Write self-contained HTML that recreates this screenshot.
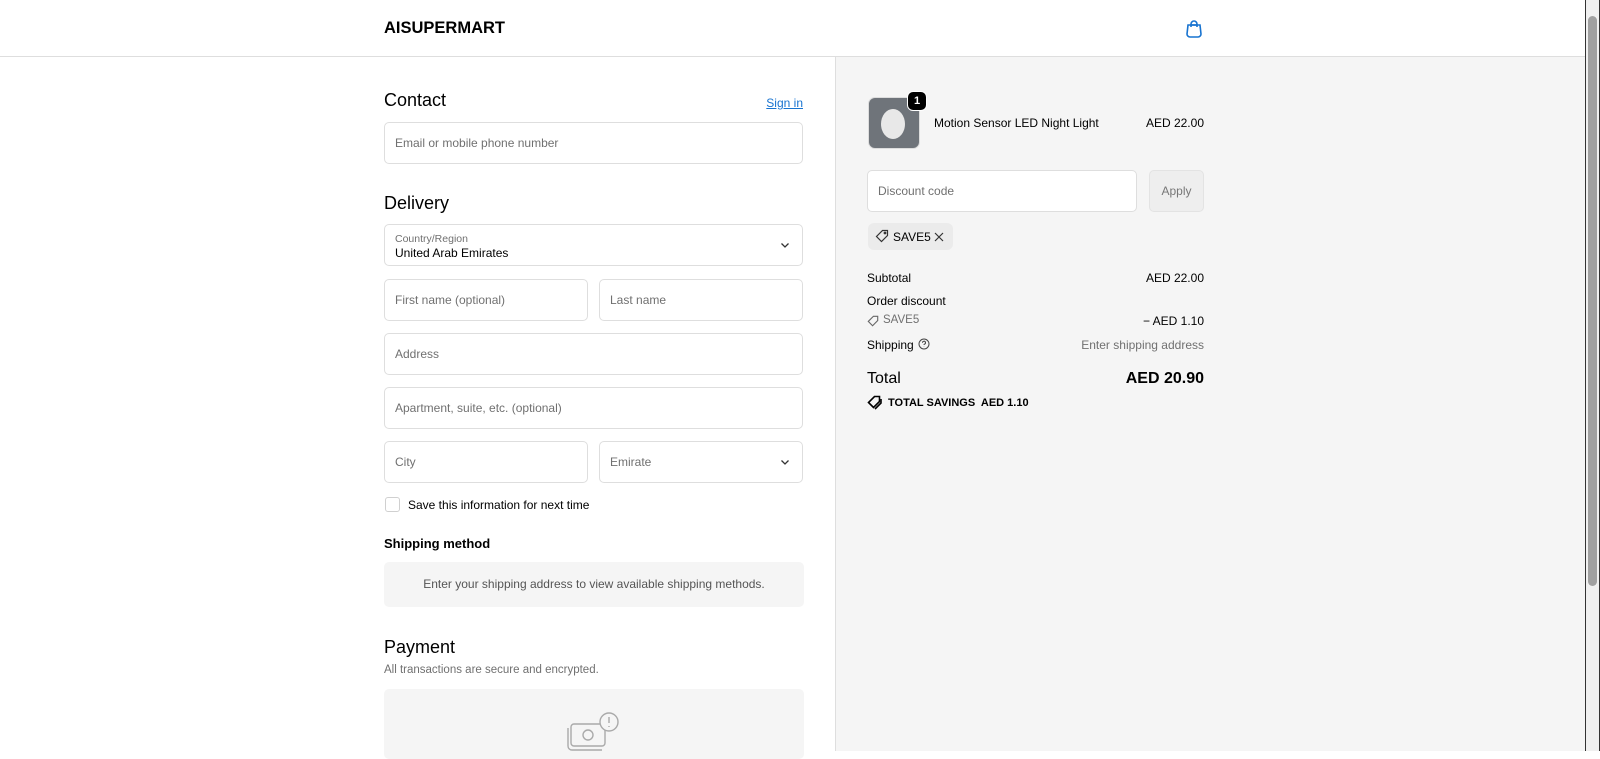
<!DOCTYPE html>
<html><head><meta charset="utf-8"><style>
*{box-sizing:border-box;margin:0;padding:0}
body{width:1600px;height:751px;overflow:hidden;font-family:"Liberation Sans",sans-serif;color:#000;background:#fff;position:relative;font-size:12px}
.hdr{position:absolute;left:0;top:0;width:1585px;height:57px;border-bottom:1px solid #dedede;background:#fff}
.logo{position:absolute;left:384px;top:19px;font-size:16.5px;font-weight:bold}
.right{position:absolute;left:835px;top:57px;width:750px;height:694px;background:#f5f5f5;border-left:1px solid #dedede}
.sb{position:absolute;left:1585px;top:0;width:15px;height:751px;background:#f0f0f0;border-left:1px solid #333;border-right:1px solid #333}
.sb div{position:absolute;left:2px;top:16px;width:9px;height:570px;background:#a0a0a0;border-radius:5px}
.a{position:absolute}
.r{transform:translateX(-100%);white-space:nowrap}
h2{position:absolute;font-size:18px;font-weight:normal}
.inp{position:absolute;border:1px solid #dedede;border-radius:5px;background:#fff;height:42px;padding:0 10px;line-height:40px;color:#707070;font-size:12px}
.chev{position:absolute;right:12px;top:15px}
.muted{color:#707070}
.box{position:absolute;background:#f5f5f5;border-radius:5px}
</style></head><body>
<div class="hdr"><div class="logo">AISUPERMART</div>
<svg class="a" style="left:1185px;top:19px" width="18" height="19" viewBox="0 0 18 19" fill="none" stroke="#1773d0" stroke-width="1.6"><path d="M3 6h12l1 9a3 3 0 0 1-3 3H5a3 3 0 0 1-3-3z"/><path d="M6 8V5a3 3 0 0 1 6 0v3"/><path d="M6 6h6"/></svg>
</div>
<div class="sb"><div></div></div>

<h2 style="left:384px;top:90px">Contact</h2>
<a class="a r" style="left:803px;top:96px;color:#1773d0;text-decoration:underline">Sign in</a>
<div class="inp" style="left:384px;top:122px;width:419px">Email or mobile phone number</div>

<h2 style="left:384px;top:193px">Delivery</h2>
<div class="inp" style="left:384px;top:224px;width:419px;line-height:normal;padding-top:8px"><div style="font-size:10.5px">Country/Region</div><div style="color:#000;font-size:12px;margin-top:1px">United Arab Emirates</div>
<svg class="chev" width="10" height="10" viewBox="0 0 10 10"><path d="M1.5 3.5l3.5 3.5 3.5-3.5" fill="none" stroke="#333" stroke-width="1.3"/></svg></div>
<div class="inp" style="left:384px;top:279px;width:204px">First name (optional)</div>
<div class="inp" style="left:599px;top:279px;width:204px">Last name</div>
<div class="inp" style="left:384px;top:333px;width:419px">Address</div>
<div class="inp" style="left:384px;top:387px;width:419px">Apartment, suite, etc. (optional)</div>
<div class="inp" style="left:384px;top:441px;width:204px">City</div>
<div class="inp" style="left:599px;top:441px;width:204px">Emirate<svg class="chev" width="10" height="10" viewBox="0 0 10 10"><path d="M1.5 3.5l3.5 3.5 3.5-3.5" fill="none" stroke="#333" stroke-width="1.3"/></svg></div>
<div class="a" style="left:385px;top:497px;width:15px;height:15px;border:1px solid #d0d0d0;border-radius:3px;background:#fff"></div>
<div class="a" style="left:408px;top:498px">Save this information for next time</div>
<div class="a" style="left:384px;top:536px;font-size:13px;font-weight:bold">Shipping method</div>
<div class="box" style="left:384px;top:562px;width:420px;height:45px;text-align:center;line-height:45px;color:#555">Enter your shipping address to view available shipping methods.</div>
<h2 style="left:384px;top:637px">Payment</h2>
<div class="a muted" style="left:384px;top:664px;font-size:11.5px">All transactions are secure and encrypted.</div>
<div class="box" style="left:384px;top:689px;width:420px;height:70px">
<svg class="a" style="left:182px;top:22px" width="56" height="40" viewBox="0 0 56 40" fill="none" stroke="#aaa" stroke-width="1.4"><rect x="5" y="13" width="34" height="22" rx="3"/><path d="M2 17v18a4 4 0 0 0 4 4h30"/><circle cx="22" cy="24" r="5"/><circle cx="43" cy="11" r="9" fill="#f5f5f5"/><path d="M43 6v6M43 15v1"/></svg></div>

<div class="right"></div>
<div class="a" style="left:868px;top:97px;width:52px;height:52px;border-radius:7px;background:#6f747a;border:1px solid #ddd;overflow:hidden">
<div style="position:absolute;left:12px;top:11px;width:24px;height:30px;border-radius:50%;background:#e8e8e8"></div></div>
<div class="a" style="left:907px;top:91px;width:20px;height:20px;border-radius:6px;background:#000;color:#fff;font-size:11px;font-weight:bold;text-align:center;line-height:18px;border:1px solid #fff">1</div>
<div class="a" style="left:934px;top:116px">Motion Sensor LED Night Light</div>
<div class="a r" style="left:1204px;top:116px">AED 22.00</div>
<div class="inp" style="left:867px;top:170px;width:270px">Discount code</div>
<div class="a" style="left:1149px;top:170px;width:55px;height:42px;border:1px solid #e3e3e3;border-radius:5px;background:#eeeeee;color:#777;text-align:center;line-height:40px">Apply</div>
<div class="a" style="left:868px;top:223px;width:85px;height:27px;border-radius:6px;background:#ebebeb"></div>
<svg class="a" style="left:875px;top:229px" width="14" height="14" viewBox="0 0 14 14" fill="none" stroke="#333" stroke-width="1.2"><path d="M7.5 1.5h5v5l-6 6-5-5z"/><circle cx="10" cy="4" r=".8"/></svg>
<div class="a" style="left:893px;top:230px">SAVE5</div>
<svg class="a" style="left:934px;top:232px" width="10" height="10" viewBox="0 0 10 10" stroke="#333" stroke-width="1.2"><path d="M1 1l8 8M9 1l-8 8"/></svg>
<div class="a" style="left:867px;top:271px">Subtotal</div>
<div class="a r" style="left:1204px;top:271px">AED 22.00</div>
<div class="a" style="left:867px;top:294px">Order discount</div>
<svg class="a" style="left:867px;top:315px" width="12" height="12" viewBox="0 0 14 14" fill="none" stroke="#666" stroke-width="1.3"><path d="M7.5 1.5h5v5l-6 6-5-5z"/></svg>
<div class="a muted" style="left:883px;top:314px;font-size:11.5px">SAVE5</div>
<div class="a r" style="left:1204px;top:314px">− AED 1.10</div>
<div class="a" style="left:867px;top:338px">Shipping</div>
<svg class="a" style="left:918px;top:338px" width="12" height="12" viewBox="0 0 12 12" fill="none" stroke="#444" stroke-width="1"><circle cx="6" cy="6" r="5"/><path d="M4.5 4.7a1.5 1.5 0 1 1 2 1.4c-.4.2-.5.5-.5.9M6 8.6v.3"/></svg>
<div class="a muted r" style="left:1204px;top:338px">Enter shipping address</div>
<div class="a" style="left:867px;top:370px;font-size:16px">Total</div>
<div class="a r" style="left:1204px;top:370px;font-size:16px;font-weight:bold">AED 20.90</div>
<svg class="a" style="left:867px;top:395px" width="15" height="15" viewBox="0 0 15 15" fill="none" stroke="#000" stroke-width="1.6"><path d="M7.5 1.5h5v5l-6 6-5-5z"/><path d="M14 4v4l-6 6"/></svg>
<div class="a" style="left:888px;top:397px;font-size:11px;font-weight:bold">TOTAL SAVINGS&nbsp; AED 1.10</div>
</body></html>
